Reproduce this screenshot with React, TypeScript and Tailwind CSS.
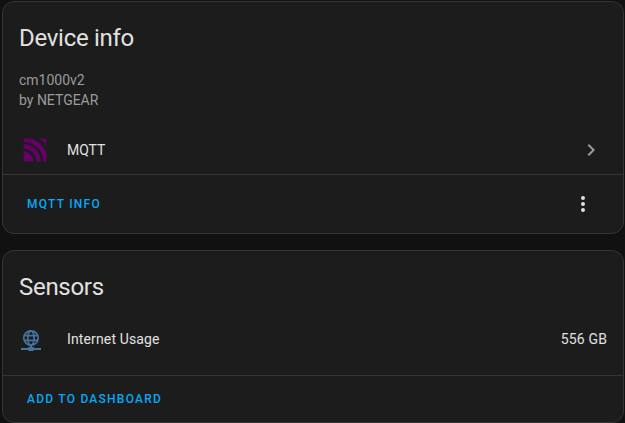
import React from "react";

function Card({ className = "", children }: { className?: string; children: React.ReactNode }) {
  return (
    <section className={`overflow-hidden rounded-xl border border-[#353535] bg-[#1c1c1c] ${className}`}>
      {children}
    </section>
  );
}

function MqttIcon() {
  return (
    <svg viewBox="0 0 24 24" className="size-6 shrink-0">
      <defs>
        <clipPath id="mqtt-frame">
          <rect x=".6" y=".6" width="22.8" height="22.8" rx=".9" />
        </clipPath>
      </defs>
      <g clipPath="url(#mqtt-frame)">
        <circle cx=".6" cy="23.4" r="9.8" fill="#660066" />
        <g fill="none" stroke="#660066">
          <circle cx=".6" cy="23.4" r="14.9" strokeWidth="4.4" />
          <circle cx=".6" cy="23.4" r="21.9" strokeWidth="4.8" />
          <circle cx=".6" cy="23.4" r="31" strokeWidth="6.6" />
        </g>
      </g>
    </svg>
  );
}

function Dots() {
  return (
    <svg viewBox="0 0 24 24" className="size-6" fill="#e1e1e1">
      <path d="M12 16a2 2 0 1 1 0 4 2 2 0 0 1 0-4m0-6a2 2 0 1 1 0 4 2 2 0 0 1 0-4m0-6a2 2 0 1 1 0 4 2 2 0 0 1 0-4" />
    </svg>
  );
}

function IpNetwork() {
  return (
    <svg viewBox="0 0 24 24" className="mt-0.5 size-6 shrink-0" fill="#44739e">
      <g fill="none" stroke="#44739e" strokeWidth="1.7">
        <circle cx="12" cy="10" r="7.2" />
        <ellipse cx="12" cy="10" rx="3.2" ry="7.2" />
        <path d="M5.4 7.6h13.2M5.4 12.4h13.2" />
      </g>
      <path d="M2 20h7a1 1 0 0 1 1-1h1v-2h2v2h1a1 1 0 0 1 1 1h7v2h-7a1 1 0 0 1-1 1h-4a1 1 0 0 1-1-1H2z" />
    </svg>
  );
}

export default function App() {
  return (
    <main className="h-[423px] w-[625px] overflow-hidden bg-[#111111] pl-0.5 pt-px font-[Roboto,sans-serif] text-sm leading-5 text-[#e1e1e1]">
      <Card className="h-[233px] w-[622px]">
        <h1 className="px-4 pt-3 text-2xl leading-12 tracking-[-0.012em]">Device info</h1>
        <div className="px-4 pt-2 text-[#9b9b9b]">
          <p>cm1000v2</p>
          <p>by NETGEAR</p>
        </div>
        <div className="mt-4 flex h-12 items-center pl-5 pr-5">
          <MqttIcon />
          <span className="ml-5 grow">MQTT</span>
          <svg viewBox="0 0 24 24" className="size-6" fill="#9b9b9b">
            <path d="M8.59 16.58 13.17 12 8.59 7.41 10 6l6 6-6 6z" />
          </svg>
        </div>
        <footer className="flex h-[59px] items-center justify-between border-t border-[#353535] pl-6 pr-7">
          <span className="text-xs font-medium tracking-[1.24px] text-[#03a9f4]">MQTT INFO</span>
          <Dots />
        </footer>
      </Card>
      <Card className="mt-4 h-[173px] w-[622px]">
        <h1 className="px-4 pt-3 text-2xl leading-12 tracking-[-0.012em]">Sensors</h1>
        <div className="mt-2 flex h-10 items-center px-4 tracking-[0.01em]">
          <IpNetwork />
          <span className="ml-6 grow">Internet Usage</span>
          <span>556 GB</span>
        </div>
        <footer className="mt-4 flex h-[47px] items-center border-t border-[#353535] pl-6">
          <span className="text-xs font-medium tracking-[1.24px] text-[#03a9f4]">ADD TO DASHBOARD</span>
        </footer>
      </Card>
    </main>
  );
}
